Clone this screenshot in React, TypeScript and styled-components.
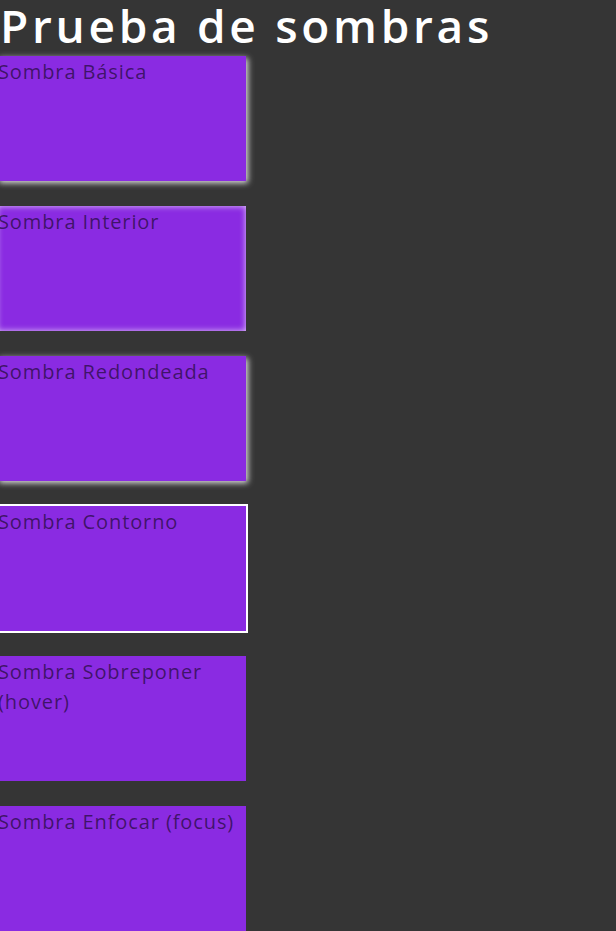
import React from "react";
import styled, { createGlobalStyle, css } from "styled-components";

const Global = createGlobalStyle`
  html, body { margin: 0; padding: 0; background: #353535; }
  body { font-family: "Open Sans", "DejaVu Sans", sans-serif; overflow: hidden; }
`;

const Page = styled.main`
  display: flex;
  flex-direction: column;
  margin-left: -3px;
`;

const Title = styled.h1`
  margin: -2px 0 0 3px;
  font-size: 46px;
  font-weight: 600;
  line-height: 55px;
  color: #ffffff;
  letter-spacing: 3.7px;
`;

const List = styled.div`
  display: flex;
  flex-direction: column;
  gap: 25px;
  margin-top: 3px;
`;

type Variant = "basic" | "inset" | "round" | "outline" | "plain";

const shadows: Record<Variant, ReturnType<typeof css>> = {
  basic: css`box-shadow: 2px 2px 6px rgba(255, 255, 255, 0.85);`,
  inset: css`box-shadow: inset 0 0 6px rgba(255, 255, 255, 0.75);`,
  round: css`box-shadow: 2px 2px 6px rgba(255, 255, 255, 0.85);`,
  outline: css`box-shadow: 0 0 0 2px #ffffff;`,
  plain: css``,
};

const Card = styled.div<{ $variant: Variant }>`
  width: 249px;
  height: 125px;
  background: #8a2be2;
  color: rgba(0, 0, 0, 0.55);
  font-size: 20px;
  line-height: 30px;
  letter-spacing: 0.9px;
  box-sizing: border-box;
  padding: 1px 0 0 1px;
  ${(p) => shadows[p.$variant]}
`;

const items: { label: string; variant: Variant }[] = [
  { label: "Sombra Básica", variant: "basic" },
  { label: "Sombra Interior", variant: "inset" },
  { label: "Sombra Redondeada", variant: "round" },
  { label: "Sombra Contorno", variant: "outline" },
  { label: "Sombra Sobreponer (hover)", variant: "plain" },
  { label: "Sombra Enfocar (focus)", variant: "plain" },
];

export default function App() {
  return (
    <>
      <Global />
      <Page>
        <Title>Prueba de sombras</Title>
        <List>
          {items.map((it) => (
            <Card key={it.label} $variant={it.variant}>
              {it.label}
            </Card>
          ))}
        </List>
      </Page>
    </>
  );
}
